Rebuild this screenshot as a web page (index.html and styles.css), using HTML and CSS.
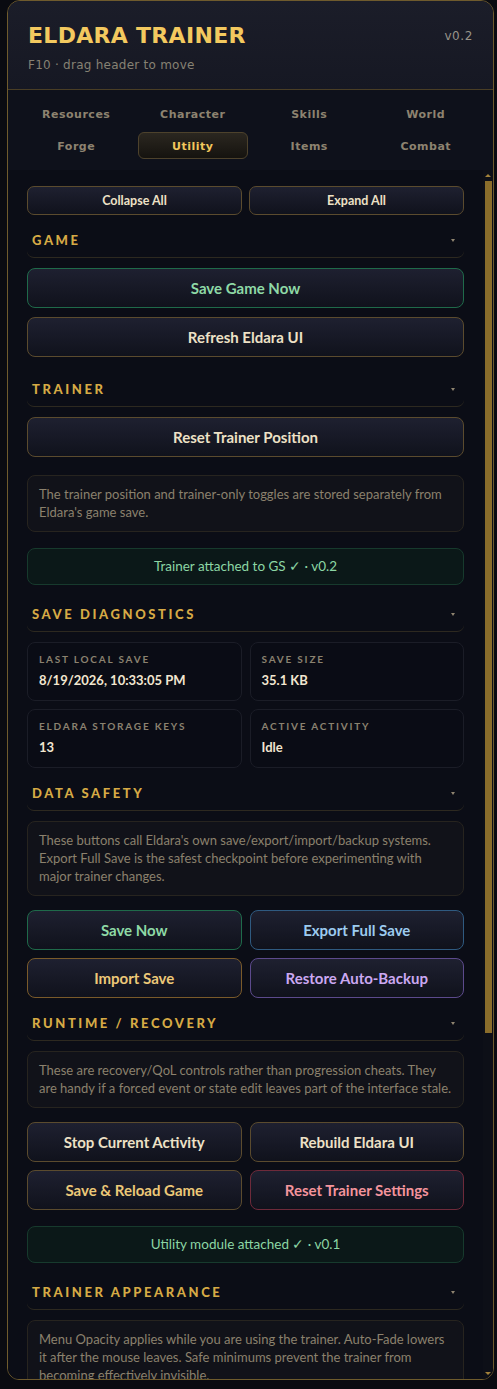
FILE: index.html
```html
<!DOCTYPE html>
<html lang="en">
<head>
<meta charset="utf-8">
<title>Eldara Trainer</title>
<link rel="stylesheet" href="styles.css">
</head>
<body>
<div class="panel">
  <header class="panel-header">
    <div class="title-row">
      <h1 class="title">ELDARA TRAINER</h1>
      <span class="version">v0.2</span>
    </div>
    <div class="subtitle">F10 · drag header to move</div>
  </header>

  <nav class="tabs">
    <button class="tab">Resources</button>
    <button class="tab">Character</button>
    <button class="tab">Skills</button>
    <button class="tab">World</button>
    <button class="tab">Forge</button>
    <button class="tab tab--active">Utility</button>
    <button class="tab">Items</button>
    <button class="tab">Combat</button>
  </nav>

  <div class="body-row">
  <main class="content">
    <div class="btn-grid btn-grid--tight">
      <button class="btn btn--small">Collapse All</button>
      <button class="btn btn--small">Expand All</button>
    </div>

    <section class="section section--spaced">
      <div class="section-head"><span>Game</span><i class="chev"></i></div>
      <div class="section-body">
        <button class="btn btn--green">Save Game Now</button>
        <button class="btn">Refresh Eldara UI</button>
      </div>
    </section>

    <section class="section">
      <div class="section-head"><span>Trainer</span><i class="chev"></i></div>
      <div class="section-body">
        <button class="btn">Reset Trainer Position</button>
        <p class="note">The trainer position and trainer-only toggles are stored separately from<br>Eldara's game save.</p>
        <div class="status">Trainer attached to GS ✓ · v0.2</div>
      </div>
    </section>

    <section class="section">
      <div class="section-head"><span>Save Diagnostics</span><i class="chev"></i></div>
      <div class="section-body">
        <div class="stats">
          <div class="stat"><div class="stat-label">Last Local Save</div><div class="stat-value">8/19/2026, 10:33:05 PM</div></div>
          <div class="stat"><div class="stat-label">Save Size</div><div class="stat-value">35.1 KB</div></div>
          <div class="stat"><div class="stat-label">Eldara Storage Keys</div><div class="stat-value">13</div></div>
          <div class="stat"><div class="stat-label">Active Activity</div><div class="stat-value">Idle</div></div>
        </div>
      </div>
    </section>

    <section class="section">
      <div class="section-head"><span>Data Safety</span><i class="chev"></i></div>
      <div class="section-body">
        <p class="note">These buttons call Eldara's own save/export/import/backup systems.<br>Export Full Save is the safest checkpoint before experimenting with<br>major trainer changes.</p>
        <div class="btn-grid">
          <button class="btn btn--green">Save Now</button>
          <button class="btn btn--blue">Export Full Save</button>
          <button class="btn btn--gold">Import Save</button>
          <button class="btn btn--purple">Restore Auto-Backup</button>
        </div>
      </div>
    </section>

    <section class="section">
      <div class="section-head"><span>Runtime / Recovery</span><i class="chev"></i></div>
      <div class="section-body">
        <p class="note">These are recovery/QoL controls rather than progression cheats. They<br>are handy if a forced event or state edit leaves part of the interface stale.</p>
        <div class="btn-grid">
          <button class="btn">Stop Current Activity</button>
          <button class="btn">Rebuild Eldara UI</button>
          <button class="btn btn--gold-text">Save &amp; Reload Game</button>
          <button class="btn btn--red">Reset Trainer Settings</button>
        </div>
        <div class="status">Utility module attached ✓ · v0.1</div>
      </div>
    </section>

    <section class="section">
      <div class="section-head"><span>Trainer Appearance</span><i class="chev"></i></div>
      <div class="section-body">
        <p class="note">Menu Opacity applies while you are using the trainer. Auto-Fade lowers<br>it after the mouse leaves. Safe minimums prevent the trainer from<br>becoming effectively invisible.</p>
        <div class="control">
          <div class="control-top"><span class="control-label">Menu Opacity</span><span class="control-value">100%</span></div>
          <div class="slider"><div class="slider-fill" style="width:100%"></div></div>
        </div>
        <div class="control control--toggle">
          <span class="control-label">Auto-Fade</span><span class="toggle"></span>
        </div>
      </div>
    </section>
  </main>

  <div class="scrollbar" aria-hidden="true">
    <span class="sb-arrow sb-arrow--up"></span>
    <span class="sb-thumb"></span>
    <span class="sb-track"></span>
    <span class="sb-arrow sb-arrow--down"></span>
  </div>
  </div>
</div>
</body>
</html>
```

FILE: styles.css
```css
* { box-sizing: border-box; }

html, body {
  margin: 0;
  padding: 0;
}

body {
  background: #0a0b11;
  height: 1389px;
  overflow: hidden;
  font-family: Lato, "Noto Sans", sans-serif;
}

.panel {
  margin-left: 7px;
  width: 487px;
  height: 1380px;
  border: 1px solid #6f5b2d;
  border-radius: 13px 13px 12px 12px;
  background: #0c0e18;
  display: flex;
  flex-direction: column;
  overflow: hidden;
}

/* Header */
.panel-header {
  flex: none;
  height: 89px;
  padding: 22px 20px 0 20px;
  border-bottom: 1px solid #4a3e25;
  background: linear-gradient(180deg, #1b1d29 0%, #161823 100%);
}

.title-row {
  display: flex;
  justify-content: space-between;
  align-items: center;
}

.title {
  margin: 0;
  font-family: "DejaVu Sans", Verdana, sans-serif;
  font-weight: 700;
  font-size: 22px;
  line-height: 26px;
  letter-spacing: 0.3px;
  color: #f3c95f;
}

.version {
  font-family: "DejaVu Sans", Verdana, sans-serif;
  font-size: 12px;
  letter-spacing: 0.6px;
  color: #98948a;
}

.subtitle {
  margin-top: 8px;
  font-family: "DejaVu Sans", Verdana, sans-serif;
  font-size: 12px;
  line-height: 16px;
  letter-spacing: 0.25px;
  color: #868173;
}

/* Tabs */
.tabs {
  flex: none;
  display: grid;
  grid-template-columns: repeat(4, 1fr);
  grid-auto-rows: 27px;
  gap: 5px 6px;
  padding: 10px 12px 11px 13px;
  background: #0e111b;
}

.tab {
  background: none;
  border: 1px solid transparent;
  border-radius: 6px;
  padding: 2px 0 0 0;
  font-family: "DejaVu Sans", Verdana, sans-serif;
  font-weight: 700;
  font-size: 11px;
  letter-spacing: 0.5px;
  color: #8d8370;
}

.tab--active {
  color: #f2c75c;
  background: linear-gradient(180deg, #2b2720 0%, #15130f 100%);
  border-color: #4d422c;
}

/* Body row: content + custom scrollbar */
.body-row {
  flex: 1;
  min-height: 0;
  display: flex;
  background: #0b0d16;
}

.content {
  flex: 1;
  min-width: 0;
  overflow: hidden;
  padding: 16px 19px 0 19px;
}

.scrollbar {
  flex: none;
  width: 10px;
  display: flex;
  flex-direction: column;
  align-items: center;
  background: #0d0f17;
}

.sb-arrow {
  flex: none;
  height: 11px;
  width: 100%;
  display: flex;
  align-items: center;
  justify-content: center;
}

.sb-arrow::before {
  content: "";
  width: 0;
  height: 0;
  border-left: 3px solid transparent;
  border-right: 3px solid transparent;
}

.sb-arrow--up::before { border-bottom: 3px solid #a3823a; }
.sb-arrow--down::before { border-top: 3px solid #a3823a; }

.sb-thumb {
  flex: none;
  width: 7px;
  height: 852px;
  margin-left: 1px;
  background: #8a6d2b;
}

.sb-track {
  flex: 1;
}

/* Buttons */
.btn-grid {
  display: grid;
  grid-template-columns: 1fr 1fr;
  gap: 8px 8px;
}

.btn-grid--tight {
  column-gap: 7px;
}

.btn {
  display: block;
  width: 100%;
  height: 40px;
  padding: 0 8px;
  border: 1px solid #5b4b2e;
  border-radius: 8px;
  background: linear-gradient(180deg, #1e2030 0%, #10121c 100%);
  font-family: Lato, "Noto Sans", sans-serif;
  font-weight: 700;
  font-size: 15px;
  color: #ede1c6;
}

.btn--small {
  height: 29px;
  font-size: 12.5px;
  border-radius: 7px;
}

.btn--green { border-color: #1f6a4a; color: #8ed9a6; }
.btn--blue { border-color: #2f5a80; color: #9ccbef; }
.btn--gold { border-color: #7a5a2a; color: #ecc878; }
.btn--gold-text { color: #ecc878; }
.btn--purple { border-color: #5c4a8c; color: #cba8f2; }
.btn--red { border-color: #6e2a3a; color: #f3949c; }

/* Sections */
.section {
  margin-top: 10px;
}

.section--spaced {
  padding-bottom: 7px;
}

.section-head {
  display: flex;
  justify-content: space-between;
  align-items: center;
  padding: 8px 9px 9px 5px;
  border-bottom: 1px solid #2d2920;
  border-radius: 0 0 7px 7px;
  font-weight: 900;
  font-size: 13px;
  line-height: 15px;
  letter-spacing: 2.6px;
  text-transform: uppercase;
  color: #d6aa45;
}

.chev {
  width: 0;
  height: 0;
  border-left: 2.5px solid transparent;
  border-right: 2.5px solid transparent;
  border-top: 3px solid #8f8470;
}

.section-body {
  display: flex;
  flex-direction: column;
  gap: 9px;
  padding-top: 10px;
}

/* Notes & status */
.note {
  margin: 0;
  padding: 9px 3px 10px 11px;
  border: 1px solid #27241f;
  border-radius: 8px;
  background: #111219;
  font-size: 13px;
  line-height: 18px;
  color: #8b816d;
}

.btn + .note { margin-top: 9px; }
.note + .btn-grid { margin-top: 5px; }

.status {
  margin-top: 7px;
  margin-bottom: 4px;
  padding: 9px 12px;
  border: 1px solid #173a2d;
  border-radius: 8px;
  background: #0b1818;
  font-size: 13.5px;
  line-height: 17px;
  text-align: center;
  color: #8cd6a4;
}

/* Stats */
.stats {
  display: grid;
  grid-template-columns: 1fr 1fr;
  gap: 8px;
}

.stat {
  padding: 10px 11px 12px 11px;
  border: 1px solid #1b1d27;
  border-radius: 8px;
  background: #0a0c15;
}

.stat-label {
  font-weight: 700;
  font-size: 10px;
  line-height: 12px;
  letter-spacing: 1.8px;
  text-transform: uppercase;
  color: #8a8270;
}

.stat-value {
  margin-top: 7px;
  font-weight: 700;
  font-size: 13px;
  line-height: 16px;
  color: #f2e6d0;
}

/* Appearance controls (below the fold) */
.control {
  padding: 10px 11px;
  border: 1px solid #1b1d27;
  border-radius: 8px;
  background: #0a0c15;
}

.control-top {
  display: flex;
  justify-content: space-between;
  font-size: 13px;
  line-height: 16px;
}

.control-label { color: #ede1c6; font-weight: 700; font-size: 13px; }
.control-value { color: #d6aa45; font-weight: 700; }

.slider {
  margin-top: 10px;
  height: 6px;
  border-radius: 3px;
  background: #1e2030;
}

.slider-fill {
  height: 100%;
  border-radius: 3px;
  background: #8a6d2b;
}

.control--toggle {
  display: flex;
  justify-content: space-between;
  align-items: center;
}

.toggle {
  width: 34px;
  height: 18px;
  border-radius: 9px;
  background: #1f6a4a;
}
```
